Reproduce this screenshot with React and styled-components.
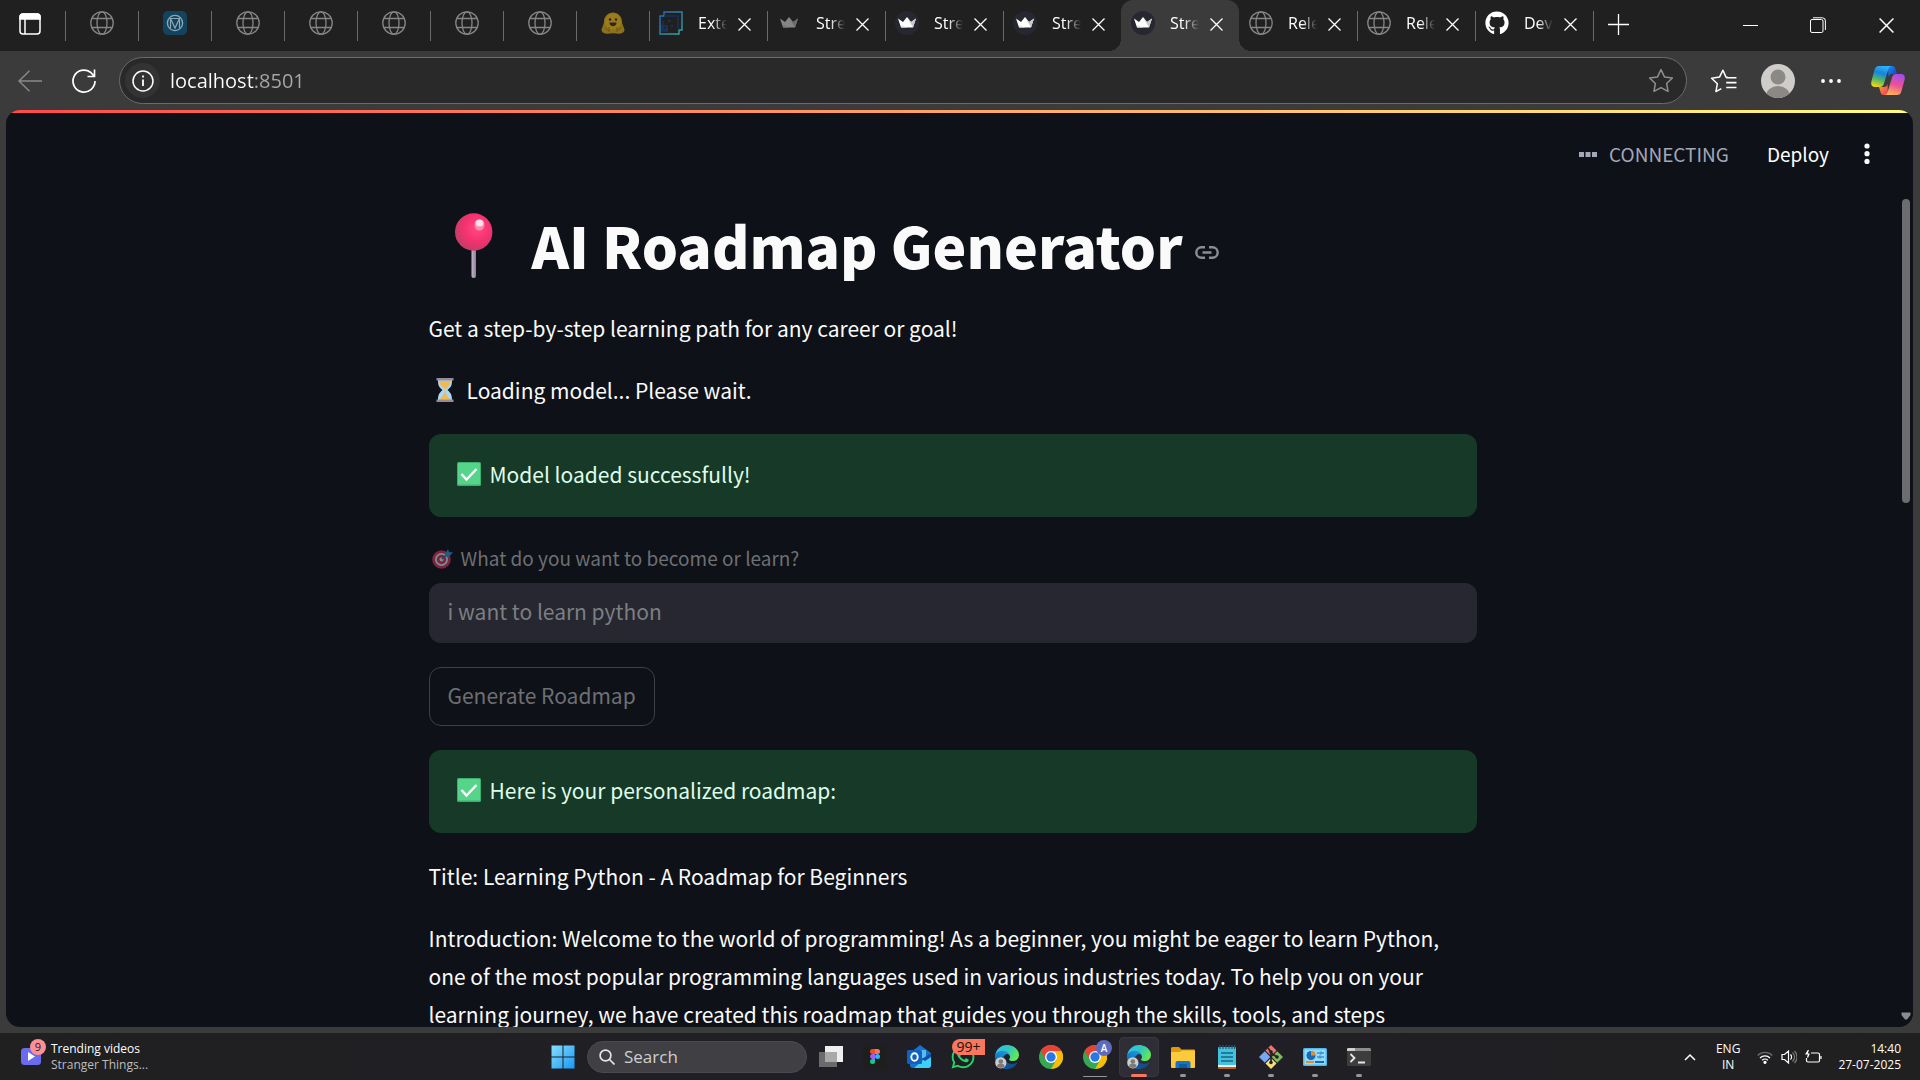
import React from "react";
import styled, { createGlobalStyle, css } from "styled-components";
import { FaGithub, FaWhatsapp } from "react-icons/fa";

const sans = `"Noto Sans CJK SC", "Noto Sans", sans-serif`;
const ui = `"Open Sans", "Noto Sans", sans-serif`;

const GlobalStyle = createGlobalStyle`
  * { box-sizing: border-box; }
  body { margin: 0; background: #3b3b3b; color: #fafafa; font-family: ${ui}; overflow: hidden; }
  button { border: 0; padding: 0; margin: 0; background: none; color: inherit; font: inherit; }
  svg { display: block; flex: none; }
`;

const Screen = styled.div`
  display: flex;
  flex-direction: column;
  height: 100vh;
`;

/* ---------- tab strip ---------- */

const TabStrip = styled.div`
  display: flex;
  height: 51px;
  background: #202020;
`;

const TabActions = styled.button`
  display: flex;
  align-items: center;
  width: 65px;
  height: 48px;
  padding-left: 19px;
`;

const Tab = styled.div`
  position: relative;
  display: flex;
  align-items: center;
  width: ${(p) => (p.$pinned ? 73 : 118)}px;
  height: 51px;
  padding: 0 0 5px ${(p) => (p.$pinned ? 25 : 10)}px;
  ${(p) =>
    p.$divider &&
    css`
      &::before {
        content: "";
        position: absolute;
        left: 0;
        top: 11px;
        width: 1px;
        height: 30px;
        background: #6a6a6a;
      }
    `}
  ${(p) =>
    p.$active &&
    css`
      background: #3b3b3b;
      border-radius: 12px 12px 0 0;
      &::before,
      &::after {
        content: "";
        position: absolute;
        bottom: 0;
        width: 12px;
        height: 12px;
      }
      &::before {
        left: -12px;
        background: radial-gradient(circle at 0 0, transparent 12px, #3b3b3b 12px);
      }
      &::after {
        right: -12px;
        background: radial-gradient(circle at 100% 0, transparent 12px, #3b3b3b 12px);
      }
    `}
`;

const TabTitle = styled.button`
  width: 34px;
  height: 28px;
  margin-left: 15px;
  text-align: left;
  white-space: nowrap;
  font-size: 16px;
  line-height: 28px;
  color: #fff;
  mask-image: linear-gradient(90deg, #000 14px, transparent 29px);
`;

const TabClose = styled.button`
  display: flex;
  margin-left: 6px;
  padding-top: 3px;
`;

const NewTab = styled.button`
  position: relative;
  display: flex;
  align-items: center;
  width: 52px;
  height: 48px;
  padding-left: 15px;
  &::before {
    content: "";
    position: absolute;
    left: 0;
    top: 11px;
    width: 1px;
    height: 30px;
    background: #6a6a6a;
  }
`;

const WindowControls = styled.div`
  display: flex;
  margin-left: auto;
`;

const WindowButton = styled.button`
  display: flex;
  align-items: center;
  justify-content: center;
  width: 68px;
  height: 50px;
`;

/* ---------- toolbar ---------- */

const Toolbar = styled.div`
  display: flex;
  align-items: center;
  height: 59px;
  padding: 0 15px 0 18px;
`;

const IconButton = styled.button`
  display: flex;
  align-items: center;
  justify-content: center;
  margin-right: ${(p) => p.$after || 0}px;
`;

const AddressBar = styled.div`
  display: flex;
  flex: 1;
  align-items: center;
  height: 47px;
  margin-right: 23px;
  padding: 0 12px 0 5px;
  border: 1px solid #6b6b6b;
  border-radius: 24px;
  background: #292929;
`;

const SiteInfo = styled.button`
  display: flex;
  align-items: center;
  justify-content: center;
  width: 35px;
  height: 35px;
  border-radius: 50%;
  background: #333;
`;

const AddressInput = styled.input`
  flex: 1;
  height: 32px;
  margin-left: 10px;
  padding: 0;
  border: 0;
  outline: 0;
  font-family: ${ui};
  font-size: 20px;
  color: #fff;
  background: linear-gradient(90deg, #fff 84px, #a8a8a8 84px);
  background-clip: text;
  -webkit-text-fill-color: transparent;
`;

/* ---------- app page ---------- */

const Page = styled.div`
  display: flex;
  flex: 1;
  flex-direction: column;
  min-height: 0;
  margin: 0 7px 6px 6px;
  overflow: hidden;
  border-radius: 14px;
  background: #0e1117;
  font-family: ${sans};
`;

const Decoration = styled.div`
  flex: none;
  height: 3px;
  background: linear-gradient(90deg, #ff4b4b, #fffd80);
`;

const AppHeader = styled.header`
  display: flex;
  flex: none;
  align-items: center;
  justify-content: flex-end;
  height: 82px;
  padding-right: 42px;
  line-height: 32px;
`;

const Status = styled.div`
  display: flex;
  align-items: center;
  gap: 12px;
  margin-right: 38px;
  font-size: 19px;
  color: #a3a8b8;
`;

const DeployButton = styled.button`
  margin-right: 34px;
  font-size: 19px;
  font-weight: 400;
  color: #fff;
`;

const PageBody = styled.div`
  display: flex;
  flex: 1;
  min-height: 0;
`;

const Main = styled.main`
  flex: 1;
  overflow: hidden;
  padding: 11px 24px 0;
`;

const Block = styled.div`
  display: flex;
  flex-direction: column;
  gap: 24px;
  max-width: 1048px;
  margin: 0 auto;
`;

const Title = styled.h1`
  display: flex;
  align-items: center;
  height: 80px;
  margin: 0;
  padding-left: 26px;
  font-size: 57px;
  font-weight: 900;
  line-height: 76px;
  white-space: nowrap;
`;

const TitleText = styled.span`
  margin: 0 12px 0 39px;
  padding-bottom: 4px;
`;

const AnchorLink = styled.a`
  padding-top: 13px;
`;

const Text = styled.p`
  display: flex;
  align-items: center;
  gap: 5px;
  margin: 0;
  padding-bottom: 2px;
  font-size: 21px;
  line-height: 36px;
`;

const Prose = styled.p`
  margin: 0;
  font-size: 21px;
  line-height: 38px;
`;

const Alert = styled.div`
  display: flex;
  align-items: center;
  gap: 5px;
  height: 83px;
  padding: 0 24px 4px;
  border-radius: 12px;
  background: #173928;
  color: #dffde9;
  font-size: 21px;
  line-height: 38px;
`;

const Field = styled.div`
  display: flex;
  flex-direction: column;
  gap: 8px;
`;

const FieldLabel = styled.label`
  display: flex;
  align-items: center;
  gap: 4px;
  font-size: 19px;
  line-height: 34px;
  color: #6d6f73;
`;

const TextInput = styled.input`
  height: 60px;
  padding: 0 19px 4px;
  border: 0;
  border-radius: 12px;
  background: #262730;
  font-family: ${sans};
  font-size: 21px;
  color: #7d7e83;
`;

const GenerateButton = styled.button`
  align-self: flex-start;
  height: 59px;
  padding: 0 18px 4px;
  border: 1px solid #3e4045;
  border-radius: 12px;
  font-size: 21px;
  line-height: 38px;
  color: #6d6f73;
`;

const ScrollTrack = styled.div`
  display: flex;
  flex: none;
  flex-direction: column;
  align-items: center;
  justify-content: space-between;
  width: 14px;
  padding: 4px 0 7px;
`;

const ScrollThumb = styled.div`
  width: 8px;
  height: 304px;
  border-radius: 4px;
  background: #6b6d70;
`;

/* ---------- taskbar ---------- */

const Taskbar = styled.footer`
  display: grid;
  grid-template-columns: 1fr auto 1fr;
  flex: none;
  height: 47px;
  background: linear-gradient(90deg, #202020, #201f27 45%, #201f26 60%, #202020);
`;

const NewsWidget = styled.button`
  display: flex;
  align-items: center;
  gap: 10px;
  padding-left: 21px;
  text-align: left;
`;

const NewsIcon = styled.span`
  position: relative;
`;

const NewsBadge = styled.span`
  position: absolute;
  left: 9px;
  top: -9px;
  width: 16px;
  height: 16px;
  border-radius: 50%;
  background: #ff8f94;
  color: #1b1b1b;
  font-size: 11px;
  line-height: 16px;
  text-align: center;
`;

const Lines = styled.span`
  display: flex;
  flex-direction: column;
  align-items: ${(p) => p.$align || "flex-start"};
  font-size: 12px;
  line-height: 16px;
  color: #fff;
`;

const Muted = styled.span`
  color: #bdbdbd;
`;

const TaskGroup = styled.div`
  display: flex;
  align-items: center;
  padding-left: 2px;
`;

const TaskButton = styled.button`
  position: relative;
  display: flex;
  align-items: center;
  justify-content: center;
  width: 40px;
  height: 40px;
  margin: 0 2px;
  border-radius: 5px;
  ${(p) => p.$current && css`background: #2f2e36; box-shadow: inset 0 0 0 1px #38373e;`}
`;

const Indicator = styled.span`
  position: absolute;
  bottom: 0;
  left: 50%;
  width: ${(p) => p.$width}px;
  height: ${(p) => (p.$width > 20 ? 1 : 3)}px;
  margin-left: ${(p) => -p.$width / 2}px;
  border-radius: 2px;
  background: ${(p) => p.$color || "#96969a"};
`;

const CountBadge = styled.span`
  position: absolute;
  left: 9px;
  top: 2px;
  width: 33px;
  height: 16px;
  border-radius: 8px 0 0 8px;
  background: #f8775d;
  color: #201010;
  font-size: 14px;
  line-height: 16px;
  text-align: center;
`;

const ProfileBadge = styled.span`
  position: absolute;
  left: 21px;
  top: 3px;
  width: 16px;
  height: 16px;
  border-radius: 50%;
  background: #5c6bc0;
  color: #fff;
  font-size: 10px;
  font-weight: 600;
  line-height: 16px;
  text-align: center;
`;

const SearchBox = styled.label`
  display: flex;
  align-items: center;
  gap: 9px;
  width: 220px;
  height: 32px;
  margin: 0 2px;
  padding: 0 11px;
  border: 1px solid #4b4a50;
  border-radius: 16px;
  background: #403f44;
`;

const SearchInput = styled.input`
  width: 100%;
  padding: 0;
  border: 0;
  outline: 0;
  background: none;
  font-family: ${ui};
  font-size: 17px;
  color: #cfcfcf;
  &::placeholder { color: #cfcfcf; opacity: 1; }
`;

const Tray = styled.div`
  display: flex;
  align-items: center;
  justify-content: flex-end;
  padding-right: 19px;
`;

const TrayButton = styled.button`
  display: flex;
  align-items: center;
  gap: ${(p) => p.$gap || 0}px;
  margin-right: ${(p) => p.$after || 0}px;
`;

/* ---------- drawings ---------- */

const Globe = () => (
  <svg width="24" height="24" viewBox="0 0 24 24" fill="none" stroke="#858585" strokeWidth="1.3">
    <circle cx="12" cy="12" r="11.2" />
    <ellipse cx="12" cy="12" rx="5" ry="11.2" />
    <path d="M1.8 7.5h20.4M1.8 16.5h20.4" />
  </svg>
);

const Crown = ({ dim }) => (
  <svg width="24" height="24" viewBox="0 0 24 24" opacity={dim ? 0.45 : 1}>
    <circle cx="12" cy="12" r="12" fill={dim ? "#222" : "#262730"} />
    <path d="M3 7.5l5 3.5 4-5 4 5 5-3.5-3 9H6z" fill="#fff" />
    <path d="M12 6l4 5 5-3.5-3 9z" fill="#c9c9cc" />
    <path d="M6 14l6 2.5H6.5z" fill="#e4e4e6" />
  </svg>
);

const MvIcon = () => (
  <svg width="24" height="24" viewBox="0 0 24 24" fill="none" stroke="#8ea7b4" strokeWidth="1.4">
    <rect width="24" height="24" rx="5" fill="#12435f" stroke="none" />
    <circle cx="12" cy="12" r="7.6" />
    <path d="M7.500 7.500L12 17l4.500-9.500M7.500 17V7.500h9V17" strokeWidth="1.200" />
  </svg>
);

const HuggingFace = () => (
  <svg width="24" height="24" viewBox="0 0 24 24">
    <path d="M12 1.5c5 0 9 4 9 9 0 2 1.500 5 2.500 8 0 3-3 4.200-6 4.200l-5.500-.5-5.500.5c-3 0-6-1.200-6-4.200C1.500 15.500 3 12.500 3 10.500c0-5 4-9 9-9z" fill="#8b701d" />
    <circle cx="12" cy="10.500" r="8.200" fill="#9a7c1c" />
    <circle cx="9" cy="8.500" r="1.200" fill="#292216" />
    <circle cx="15" cy="8.500" r="1.200" fill="#292216" />
    <path d="M8.500 11.500h7c0 5-7 5-7 0z" fill="#33251a" />
    <path d="M3.500 16.500l5 3.500M20.500 16.500l-5 3.500M8 16v5M16 16v5" stroke="#6f5917" />
  </svg>
);

const ExtIcon = () => (
  <svg width="24" height="24" viewBox="0 0 24 24" fill="none" strokeWidth="1.4">
    <defs>
      <linearGradient id="ext" x1="0" y1="0" x2="1" y2="1">
        <stop offset="0" stopColor="#2866b8" />
        <stop offset="1" stopColor="#33a79b" />
      </linearGradient>
    </defs>
    <path d="M5 1h18v18h-3v4H1V5h4z" stroke="url(#ext)" />
    <path d="M5 5h14v14M4 10v8h4v3" stroke="#1b2f58" strokeWidth="1.500" />
    <path d="M3 15h5v5H3zM9 10h3M12 15h2" stroke="#1a3462" strokeWidth="1.500" />
  </svg>
);

const Cross = ({ size = 13 }) => (
  <svg width={size} height={size} viewBox="0 0 13 13" stroke="#fff" strokeWidth="1.3">
    <path d="M.5.5l12 12M12.500.5L.5 12.500" />
  </svg>
);

const Person = ({ size }) => (
  <svg width={size} height={size} viewBox="0 0 34 34">
    <clipPath id={"p" + size}>
      <circle cx="17" cy="17" r="17" />
    </clipPath>
    <g clipPath={`url(#p${size})`}>
      <rect width="34" height="34" fill="#cfcdca" />
      <circle cx="17" cy="13" r="7.500" fill="#8c8885" />
      <ellipse cx="17" cy="32" rx="12" ry="10" fill="#8c8885" />
    </g>
  </svg>
);

const Copilot = () => (
  <svg width="34" height="31" viewBox="0 0 34 31">
    <defs>
      <linearGradient id="cpA" x1="0.600" y1="0" x2="0.300" y2="1">
        <stop offset="0" stopColor="#2fb5f5" />
        <stop offset=".35" stopColor="#1783e0" />
        <stop offset=".65" stopColor="#4fb56b" />
        <stop offset="1" stopColor="#f4d60b" />
      </linearGradient>
      <linearGradient id="cpB" x1="0.700" y1="0" x2="0.400" y2="1">
        <stop offset="0" stopColor="#a34df0" />
        <stop offset=".5" stopColor="#ec4f97" />
        <stop offset="1" stopColor="#ffb057" />
      </linearGradient>
      <linearGradient id="cpC" x1="0" y1="0" x2="1" y2="1">
        <stop offset="0" stopColor="#1593ec" />
        <stop offset="1" stopColor="#1b35c4" />
      </linearGradient>
      <linearGradient id="cpD" x1="0" y1="0" x2="1" y2="1">
        <stop offset="0" stopColor="#ffa03a" />
        <stop offset="1" stopColor="#ee3a58" />
      </linearGradient>
    </defs>
    <path d="M17 1h4c2 0 3 1 3.500 3L26 9h-5c-2 0-3 1-3.500 3z" fill="url(#cpC)" />
    <path d="M17 30h-4c-2 0-3-1-3.500-3L8 22h5c2 0 3-1 3.500-3z" fill="url(#cpD)" />
    <path d="M8 1h13c-2 0-3 1-3.600 3l-4.600 15c-.6 2-2 3-4 3H4c-3 0-4.500-2-3.500-6l3-11C4.300 2 5.800 1 8 1z" fill="url(#cpA)" />
    <path d="M26 30H13c2 0 3-1 3.600-3l4.600-15c.6-2 2-3 4-3H30c3 0 4.500 2 3.500 6l-3 11c-.8 3-2.300 4-4.500 4z" fill="url(#cpB)" />
  </svg>
);

const Pushpin = () => (
  <svg width="38" height="66" viewBox="0 0 38 66" role="img" aria-label="Pushpin">
    <defs>
      <radialGradient id="pin" cx=".6" cy=".4" r=".6">
        <stop offset="0" stopColor="#ff4a85" />
        <stop offset=".6" stopColor="#f5316f" />
        <stop offset="1" stopColor="#c63d68" />
      </radialGradient>
      <linearGradient id="stick">
        <stop offset="0" stopColor="#c5b5cf" />
        <stop offset="1" stopColor="#8d7f98" />
      </linearGradient>
    </defs>
    <rect x="16.500" y="35" width="4.500" height="30" rx="2" fill="url(#stick)" />
    <circle cx="18.700" cy="19" r="18.700" fill="url(#pin)" />
    <ellipse cx="24.500" cy="12" rx="5" ry="5.500" fill="#ffb4cb" opacity=".6" />
    <ellipse cx="24.500" cy="10" rx="4" ry="3.500" fill="#fff" opacity=".75" />
  </svg>
);

const Hourglass = () => (
  <svg width="33" height="26" viewBox="0 0 33 26" role="img" aria-label="Hourglass">
    <path d="M9 3h14c0 6-1 7-4.500 10 3.500 3 4.500 5 4.500 10H9c0-5 1-7 4.500-10C10 10 9 9 9 3z" fill="#a9d7f7" />
    <path d="M10.500 4h11c0 4-1.500 5-5 8.500-4-3.500-6-4.500-6-8.500zM16 12c.8 5 1.500 6 5.500 10.500h-11C14 19 15.500 17 16 12z" fill="#f2b950" />
    <path d="M7.500 1h17v2.600h-17zM7.500 22.400h17V25h-17z" fill="#998b94" />
  </svg>
);

const CheckMark = () => (
  <svg width="32" height="24" viewBox="0 0 32 24" role="img" aria-label="Check mark">
    <rect x="4" width="24" height="24" rx="1.500" fill="#3fae71" />
    <rect x="5" y="1" width="22" height="21.500" rx="1" fill="#55d58a" />
    <path d="M8.500 12l5 5.500 10-10.500" fill="none" stroke="#fff" strokeWidth="2.400" />
  </svg>
);

const Target = () => (
  <svg width="28" height="22" viewBox="0 0 28 22" role="img" aria-label="Target">
    <circle cx="12.500" cy="12.500" r="9.300" fill="#7c2541" />
    <circle cx="12.500" cy="12.500" r="6.500" fill="#86898f" />
    <circle cx="12.500" cy="12.500" r="4.700" fill="#7c2541" />
    <circle cx="12.500" cy="12.500" r="2" fill="#86898f" />
    <path d="M13 12l6-6" stroke="#26415b" strokeWidth="1.500" />
    <path d="M16 7l3-5 1 3 4 .5-4 4-4 .5z" fill="#245a85" />
  </svg>
);

const Edge = () => (
  <svg width="24" height="24" viewBox="0 0 256 256">
    <defs>
      <linearGradient id="eg1" x1="0" x2="1">
        <stop offset="0" stopColor="#0c59a4" />
        <stop offset="1" stopColor="#114a8b" />
      </linearGradient>
      <linearGradient id="eg2" x1=".7" y1="0" x2=".3" y2="1">
        <stop offset="0" stopColor="#1b9de2" />
        <stop offset="1" stopColor="#0c5ba8" />
      </linearGradient>
      <linearGradient id="eg3" x1="0" y1=".2" x2="1" y2=".6">
        <stop offset="0" stopColor="#35c1f1" />
        <stop offset=".5" stopColor="#2fc6c0" />
        <stop offset="1" stopColor="#66eb4e" />
      </linearGradient>
    </defs>
    <path fill="url(#eg1)" d="M231 190.500c-3.400 1.800-6.900 3.400-10.500 4.700a101.500 101.500 0 0 1-35.900 6.400c-47.300 0-88.500-32.500-88.500-74.300a31.500 31.500 0 0 1 16.400-27.300c-42.800 1.800-53.800 46.400-53.800 72.500 0 74 68.100 81.400 82.800 81.400 7.900 0 19.800-2.300 27-4.600l1.300-.4a128.300 128.300 0 0 0 66.600-52.800 4 4 0 0 0-5.400-5.600z" />
    <path fill="url(#eg2)" d="M105.700 241.400a79.200 79.200 0 0 1-22.700-21.300 80.700 80.700 0 0 1 29.500-120c3.200-1.500 8.500-4.100 15.600-4a32.400 32.400 0 0 1 25.700 13 31.900 31.900 0 0 1 6.300 18.700c0-.2 24.500-79.600-80-79.600-43.900 0-80 41.700-80 78.200a130.200 130.200 0 0 0 12.100 56 128 128 0 0 0 156.400 67.100 75.600 75.600 0 0 1-62.800-8.100z" />
    <path fill="url(#eg3)" d="M152.300 148.900c-.9 1-3.400 2.500-3.400 5.600 0 2.600 1.700 5.200 4.800 7.300 14.300 10 41.400 8.600 41.500 8.600a59.600 59.600 0 0 0 30.300-8.300 61.400 61.400 0 0 0 30.400-52.900c.3-22.400-8-37.300-11.300-43.900C223.500 23.900 177.700 0 128 0A128 128 0 0 0 0 126.200c.5-36.500 36.800-66 80-66 3.500 0 23.500.3 42 10.100a72.600 72.600 0 0 1 30.900 29.300c6.100 10.600 7.200 24.100 7.200 29.500s-2.700 13.300-7.800 19.900z" />
    <circle cx="62" cy="190" r="60" fill="#cfcdca" />
    <circle cx="62" cy="176" r="25" fill="#7d7a77" />
    <path d="M22 226c0-40 80-40 80 0-20 24-60 24-80 0z" fill="#7d7a77" />
  </svg>
);

const Chrome = () => (
  <svg width="24" height="24" viewBox="0 0 48 48">
    <circle cx="24" cy="24" r="24" fill="#34a853" />
    <path d="M24 24L3.200 12A24 24 0 0 1 44.800 12z" fill="#ea4335" />
    <path d="M24 12h20.800A24 24 0 0 1 24 48l10.400-18z" fill="#fbbc04" />
    <path d="M3.200 12L13.600 30 24 24V12z" fill="#ea4335" />
    <circle cx="24" cy="24" r="12" fill="#fff" />
    <circle cx="24" cy="24" r="9.300" fill="#2a78e8" />
  </svg>
);

const WindowsLogo = () => (
  <svg width="24" height="24" viewBox="0 0 24 24">
    <defs>
      <linearGradient id="win" x1="0" y1="0" x2="24" y2="24" gradientUnits="userSpaceOnUse">
        <stop offset="0" stopColor="#8be0fd" />
        <stop offset="1" stopColor="#1496f5" />
      </linearGradient>
    </defs>
    <path d="M.5.5h11v11H.5zM12.500.5h11v11h-11zM.5 12.500h11v11H.5zM12.500 12.500h11v11h-11z" fill="url(#win)" />
  </svg>
);

const TaskView = () => (
  <svg width="24" height="24" viewBox="0 0 24 24">
    <rect x="6" y="1" width="18" height="16" fill="#efefef" />
    <rect x="0" y="7" width="18" height="15" fill="#6b6b6b" />
    <rect x="6" y="7" width="12" height="10" fill="#a9a9a9" />
  </svg>
);

const Figma = () => (
  <svg width="24" height="24" viewBox="0 0 24 24">
    <rect width="24" height="24" fill="#1e1e1e" />
    <path d="M9.500 4H12v5H9.500a2.500 2.500 0 0 1 0-5z" fill="#f24e1e" />
    <path d="M12 4h2.500a2.500 2.500 0 0 1 0 5H12z" fill="#ff7262" />
    <path d="M9.500 9H12v5H9.500a2.500 2.500 0 0 1 0-5z" fill="#a259ff" />
    <circle cx="14.500" cy="11.500" r="2.500" fill="#1abcfe" />
    <path d="M9.500 14H12v2.500A2.500 2.500 0 1 1 9.500 14z" fill="#0acf83" />
  </svg>
);

const Outlook = () => (
  <svg width="24" height="24" viewBox="0 0 24 24">
    <path d="M3 8l10-8 11 8v12a3 3 0 0 1-3 3H6a3 3 0 0 1-3-3z" fill="#1673c8" />
    <path d="M9 5h10v8H9z" fill="#5db9f5" />
    <path d="M24 8v12a3 3 0 0 1-3 3H7z" fill="#3fd0fa" />
    <path d="M15 14l9-6v4L18 16z" fill="#134f9c" />
    <rect y="5" width="15" height="14" rx="1.500" fill="#0f62c0" />
    <ellipse cx="7.500" cy="12" rx="3.200" ry="3.800" fill="none" stroke="#fff" strokeWidth="1.900" />
  </svg>
);

const Explorer = () => (
  <svg width="24" height="24" viewBox="0 0 24 24">
    <path d="M0 3.500A1.500 1.500 0 0 1 1.500 2H8l2.500 2.500H23a1 1 0 0 1 1 1V9H0z" fill="#dc9a10" />
    <path d="M0 7h9l2-1.500h12a1 1 0 0 1 1 1V22a1 1 0 0 1-1 1H1a1 1 0 0 1-1-1z" fill="#fccb3b" />
    <path d="M4.500 23v-5a2 2 0 0 1 2-2h11a2 2 0 0 1 2 2v5z" fill="#1674c8" />
    <path d="M8 19h8v4H8z" fill="#0e5aa6" />
  </svg>
);

const Notepad = () => (
  <svg width="24" height="24" viewBox="0 0 24 24">
    <rect x="3" y="20" width="18" height="4" rx="1" fill="#b5601f" />
    <rect x="3" y="19" width="18" height="3" fill="#f1efe9" />
    <rect x="3" y="2" width="18" height="18" rx="1" fill="#45c1e0" />
    <path d="M5 0v4M8 0v4M11 0v4M14 0v4M17 0v4M19.500 0v4" stroke="#145b75" strokeWidth="1.200" />
    <path d="M6 8h12M6 12h12M6 16h12" stroke="#14657f" strokeWidth="1.500" />
  </svg>
);

const GitIcon = () => (
  <svg width="24" height="24" viewBox="0 0 24 24">
    <path d="M12 0l5.500 5.500L12 11 6.500 5.500z" fill="#ef7470" />
    <path d="M5.800 6.200l5.500 5.800-5.500 5.800L0 12z" fill="#76a9f5" />
    <path d="M18.200 6.200L24 12l-5.800 5.800-5.500-5.800z" fill="#7fbc5a" />
    <path d="M12 13l5.500 5.500L12 24l-5.500-5.500z" fill="#f5df7d" />
    <path d="M9 3l3 4v11M12 8l6 4" fill="none" stroke="#252028" strokeWidth="1.700" />
    <circle cx="12" cy="17.500" r="1.800" fill="#252028" />
    <circle cx="18" cy="12" r="1.800" fill="#252028" />
    <circle cx="12" cy="7" r="1.800" fill="#252028" />
  </svg>
);

const ControlPanel = () => (
  <svg width="24" height="24" viewBox="0 0 24 24">
    <rect y="3" width="24" height="18" rx="1.500" fill="#52b8ea" />
    <rect x="1.500" y="4.500" width="21" height="15" fill="#93dcf9" />
    <circle cx="8" cy="10.500" r="4.500" fill="#1768b5" />
    <path d="M8 10.500V6a4.500 4.500 0 0 1 4.500 4.500z" fill="#f28a24" />
    <path d="M14 8h3M18 6.500v3M19 8h2M14 12h2M17 10.500v3M18 12h3" stroke="#1768b5" strokeWidth="1.200" />
    <path d="M3 17h8" stroke="#f28a24" strokeWidth="2" />
    <path d="M12 17h9" stroke="#1768b5" strokeWidth="2" />
  </svg>
);

const Terminal = () => (
  <svg width="24" height="24" viewBox="0 0 24 24">
    <rect y="3" width="24" height="18" rx="1.500" fill="#3d3d3d" />
    <path d="M0 6V4.500A1.500 1.500 0 0 1 1.500 3h21A1.500 1.500 0 0 1 24 4.500V6z" fill="#8d8d8d" />
    <path d="M0 6V4.500A1.500 1.500 0 0 1 1.500 3H8v3z" fill="#cfcfcf" />
    <path d="M3.500 9l4 4-4 4M11 17.500h7" fill="none" stroke="#e6e6e6" strokeWidth="1.800" />
  </svg>
);

const pinned = [
  ["Page", Globe],
  ["Model viewer", MvIcon],
  ["Page", Globe],
  ["Page", Globe],
  ["Page", Globe],
  ["Page", Globe],
  ["Page", Globe],
  ["Hugging Face", HuggingFace],
];

const tabs = [
  { title: "Exte", icon: <ExtIcon />, divider: true },
  { title: "Stre", icon: <Crown dim />, divider: true },
  { title: "Stre", icon: <Crown />, divider: true },
  { title: "Stre", icon: <Crown />, divider: true },
  { title: "Stre", icon: <Crown />, active: true },
  { title: "Rele", icon: <Globe /> },
  { title: "Rele", icon: <Globe />, divider: true },
  { title: "Dev", icon: <FaGithub size={24} color="#fff" />, divider: true },
];

const tasks = [
  { name: "Task view", icon: <TaskView /> },
  { name: "Figma", icon: <Figma /> },
  { name: "Outlook", icon: <Outlook /> },
  { name: "WhatsApp", icon: <FaWhatsapp size={26} color="#25d366" />, extra: <CountBadge>99+</CountBadge> },
  { name: "Edge", icon: <Edge /> },
  { name: "Chrome", icon: <Chrome /> },
  { name: "Chrome profile", icon: <Chrome />, extra: <ProfileBadge>A</ProfileBadge>, mark: 24 },
  { name: "Edge window", icon: <Edge />, current: true, mark: 16, color: "#f8775d" },
  { name: "File Explorer", icon: <Explorer />, mark: 6 },
  { name: "Notepad", icon: <Notepad />, mark: 6 },
  { name: "Git", icon: <GitIcon />, mark: 6 },
  { name: "Control Panel", icon: <ControlPanel />, mark: 6 },
  { name: "Terminal", icon: <Terminal />, mark: 6 },
];

export default function App() {
  return (
    <Screen>
      <GlobalStyle />
      <TabStrip>
        <TabActions aria-label="Tab actions">
          <svg width="22" height="22" viewBox="0 0 22 22" fill="none" stroke="#fff" strokeWidth="1.500">
            <rect x="1" y="1" width="20" height="20" rx="3" />
            <path d="M1 6V4a3 3 0 0 1 3-3h14a3 3 0 0 1 3 3v2z" fill="#fff" />
            <path d="M6 6v15" />
          </svg>
        </TabActions>
        {pinned.map(([name, Icon], i) => (
          <Tab key={i} $pinned $divider>
            <IconButton aria-label={name}><Icon /></IconButton>
          </Tab>
        ))}
        {tabs.map((t, i) => (
          <Tab key={i} $active={t.active} $divider={t.divider}>
            {t.icon}
            <TabTitle>{t.title}</TabTitle>
            <TabClose aria-label="Close tab"><Cross /></TabClose>
          </Tab>
        ))}
        <NewTab aria-label="New tab">
          <svg width="21" height="21" viewBox="0 0 21 21" stroke="#fff" strokeWidth="1.300"><path d="M10.500 0v21M0 10.500h21" /></svg>
        </NewTab>
        <WindowControls>
          <WindowButton aria-label="Minimize">
            <svg width="15" height="15" viewBox="0 0 15 15" stroke="#fff"><path d="M0 7.500h15" /></svg>
          </WindowButton>
          <WindowButton aria-label="Restore">
            <svg width="16" height="16" viewBox="0 0 16 16" fill="none" stroke="#fff">
              <rect x=".5" y="2.500" width="12.500" height="13" rx="1.500" />
              <path d="M3 .8h9.500A3 3 0 0 1 15.400 4v9" />
            </svg>
          </WindowButton>
          <WindowButton aria-label="Close"><Cross size={15} /></WindowButton>
        </WindowControls>
      </TabStrip>

      <Toolbar>
        <IconButton aria-label="Back" $after={30}>
          <svg width="24" height="22" viewBox="0 0 24 22" fill="none" stroke="#8a8a8a" strokeWidth="1.400"><path d="M24 11H1M11.500.7L1 11l10.500 10.300" /></svg>
        </IconButton>
        <IconButton aria-label="Refresh" $after={23}>
          <svg width="24" height="24" viewBox="0 0 24 24" fill="none" stroke="#fff" strokeWidth="1.700"><path d="M23 12A11 11 0 1 1 18.500 3.200L22 7M22.500.5V7.500H15.500" /></svg>
        </IconButton>
        <AddressBar>
          <SiteInfo aria-label="Site information">
            <svg width="22" height="22" viewBox="0 0 22 22" fill="none" stroke="#fff" strokeWidth="1.500">
              <circle cx="11" cy="11" r="10" />
              <path d="M11 9.500v6.500M11 5.500v2" strokeWidth="1.800" />
            </svg>
          </SiteInfo>
          <AddressInput aria-label="Address" defaultValue="localhost:8501" />
          <IconButton aria-label="Add to favorites">
            <svg width="26" height="26" viewBox="0 0 24 24" fill="none" stroke="#8f8f8f" strokeWidth="1.400" strokeLinejoin="round"><path d="M12 1.500l3.200 6.700 7.300 1-5.300 5.100 1.300 7.300L12 18.100l-6.500 3.500 1.300-7.300L1.500 9.200l7.300-1z" /></svg>
          </IconButton>
        </AddressBar>
        <IconButton aria-label="Favorites" $after={24}>
          <svg width="27" height="26" viewBox="0 0 25 24" fill="none" stroke="#fff" strokeWidth="1.400" strokeLinejoin="round"><path d="M16.500 8.700l-1.700-.3L12 2 8.800 8.400l-7.300 1 5.300 5.100-1.300 7.300 5-2.700M15 9h9.500M15 13.500h9.500M15 18h9.500" /></svg>
        </IconButton>
        <IconButton aria-label="Profile" $after={26}><Person size={34} /></IconButton>
        <IconButton aria-label="Settings and more" $after={30}>
          <svg width="20" height="6" viewBox="0 0 20 6" fill="#fff"><circle cx="2" cy="3" r="1.900" /><circle cx="10" cy="3" r="1.900" /><circle cx="18" cy="3" r="1.900" /></svg>
        </IconButton>
        <IconButton aria-label="Copilot"><Copilot /></IconButton>
      </Toolbar>

      <Page>
        <Decoration />
        <AppHeader>
          <Status>
            <svg width="18" height="5" viewBox="0 0 18 5" fill="#a3a8b8"><path d="M0 0h5v5H0zM6.500 0h5v5h-5zM13 0h5v5h-5z" /></svg>
            CONNECTING
          </Status>
          <DeployButton>Deploy</DeployButton>
          <IconButton aria-label="Main menu">
            <svg width="8" height="22" viewBox="0 0 8 22" fill="#fafafa"><circle cx="4" cy="3" r="2.600" /><circle cx="4" cy="10.700" r="2.600" /><circle cx="4" cy="18.400" r="2.600" /></svg>
          </IconButton>
        </AppHeader>
        <PageBody>
          <Main>
            <Block>
              <Title>
                <Pushpin />
                <TitleText>AI Roadmap Generator</TitleText>
                <AnchorLink href="#ai-roadmap-generator" aria-label="Link to heading">
                  <svg width="24" height="13" viewBox="0 0 24 13" fill="none" stroke="#8b8d91" strokeWidth="2.400"><path d="M10 1.300H6.500a5.200 5.200 0 0 0 0 10.400H10M14 1.300h3.500a5.200 5.200 0 0 1 0 10.400H14M7.500 6.500h9" /></svg>
                </AnchorLink>
              </Title>
              <Text>Get a step-by-step learning path for any career or goal!</Text>
              <Text><Hourglass />Loading model... Please wait.</Text>
              <Alert role="status"><CheckMark />Model loaded successfully!</Alert>
              <Field>
                <FieldLabel htmlFor="goal"><Target />What do you want to become or learn?</FieldLabel>
                <TextInput id="goal" readOnly value="i want to learn python" />
              </Field>
              <GenerateButton>Generate Roadmap</GenerateButton>
              <Alert role="status"><CheckMark />Here is your personalized roadmap:</Alert>
              <Prose>Title: Learning Python - A Roadmap for Beginners</Prose>
              <Prose>
                Introduction: Welcome to the world of programming! As a beginner, you might be eager to learn Python,
                one of the most popular programming languages used in various industries today. To help you on your
                learning journey, we have created this roadmap that guides you through the skills, tools, and steps
              </Prose>
            </Block>
          </Main>
          <ScrollTrack>
            <ScrollThumb />
            <svg width="10" height="8" viewBox="0 0 10 8" fill="#8b8c8f"><path d="M.5.5h9V3L6 7.500H4L.5 3z" /></svg>
          </ScrollTrack>
        </PageBody>
      </Page>

      <Taskbar>
        <NewsWidget>
          <NewsIcon>
            <svg width="20" height="17" viewBox="0 0 20 17">
              <rect width="20" height="17" rx="3.500" fill="#6a6cf0" />
              <path d="M7 4l7 4.500L7 13z" fill="#fff" />
            </svg>
            <NewsBadge>9</NewsBadge>
          </NewsIcon>
          <Lines>
            <span>Trending videos</span>
            <Muted>Stranger Things...</Muted>
          </Lines>
        </NewsWidget>
        <TaskGroup>
          <TaskButton aria-label="Start"><WindowsLogo /></TaskButton>
          <SearchBox>
            <svg width="16" height="16" viewBox="0 0 16 16" fill="none" stroke="#e4e4e4" strokeWidth="1.700"><circle cx="6.500" cy="6.500" r="5.400" /><path d="M10.500 10.500l5 5" /></svg>
            <SearchInput aria-label="Search" placeholder="Search" />
          </SearchBox>
          {tasks.map((t) => (
            <TaskButton key={t.name} aria-label={t.name} $current={t.current}>
              {t.icon}
              {t.extra}
              {t.mark && <Indicator $width={t.mark} $color={t.color} />}
            </TaskButton>
          ))}
        </TaskGroup>
        <Tray>
          <TrayButton aria-label="Hidden icons" $after={20}>
            <svg width="12" height="8" viewBox="0 0 12 8" fill="none" stroke="#fff" strokeWidth="1.500"><path d="M1 7l5-5 5 5" /></svg>
          </TrayButton>
          <TrayButton $after={17}>
            <Lines $align="center"><span>ENG</span><span>IN</span></Lines>
          </TrayButton>
          <TrayButton aria-label="Network, volume and battery" $gap={8} $after={16}>
            <svg width="16" height="14" viewBox="0 0 16 14" fill="none" stroke="#fff" strokeWidth="1.300">
              <path d="M.7 5.500a10.300 10.300 0 0 1 14.600 0" stroke="#6a6a6a" />
              <path d="M3 8a7 7 0 0 1 10 0M5.200 10.300a4 4 0 0 1 5.600 0" />
              <circle cx="8" cy="12.300" r="1" fill="#fff" />
            </svg>
            <svg width="16" height="14" viewBox="0 0 16 14" fill="none" stroke="#fff" strokeWidth="1.200">
              <path d="M1 4.500h2.500L7.500 1v12L3.500 9.500H1zM9.500 4.500a3.500 3.500 0 0 1 0 5" />
              <path d="M11.500 2.500a6 6 0 0 1 0 9M13.500 1a8.500 8.500 0 0 1 0 12" stroke="#7a7a7a" />
            </svg>
            <svg width="17" height="14" viewBox="0 0 17 14" fill="none" stroke="#fff" strokeWidth="1.200">
              <path d="M6 3h7a1.500 1.500 0 0 1 1.500 1.500v6A1.500 1.500 0 0 1 13 12H3a1.500 1.500 0 0 1-1.500-1.500V8M16 6v3" />
              <path d="M3.500 0L1 4h3L2.500 7.500" fill="#fff" />
            </svg>
          </TrayButton>
          <TrayButton>
            <Lines $align="flex-end"><span>14:40</span><span>27-07-2025</span></Lines>
          </TrayButton>
        </Tray>
      </Taskbar>
    </Screen>
  );
}
